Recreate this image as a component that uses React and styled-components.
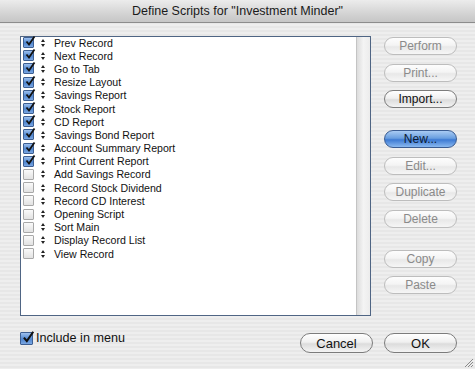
import styled, { createGlobalStyle, css } from "styled-components";

const GlobalStyle = createGlobalStyle`
  html, body {
    margin: 0;
    padding: 0;
  }
  body {
    font-family: "Liberation Sans", "DejaVu Sans", sans-serif;
    color: #111;
  }
`;

const scripts = [
  { name: "Prev Record", on: true },
  { name: "Next Record", on: true },
  { name: "Go to Tab", on: true },
  { name: "Resize Layout", on: true },
  { name: "Savings Report", on: true },
  { name: "Stock Report", on: true },
  { name: "CD Report", on: true },
  { name: "Savings Bond Report", on: true },
  { name: "Account Summary Report", on: true },
  { name: "Print Current Report", on: true },
  { name: "Add Savings Record", on: false },
  { name: "Record Stock Dividend", on: false },
  { name: "Record CD Interest", on: false },
  { name: "Opening Script", on: false },
  { name: "Sort Main", on: false },
  { name: "Display Record List", on: false },
  { name: "View Record", on: false },
];

const Window = styled.div`
  width: 475px;
  height: 369px;
  display: flex;
  flex-direction: column;
  overflow: hidden;
  background: repeating-linear-gradient(
    to bottom,
    #eeeeee 0px,
    #eeeeee 2px,
    #e7e7e7 2px,
    #e7e7e7 4px
  );
  position: relative;
`;

const TitleBar = styled.div`
  height: 22px;
  flex-shrink: 0;
  display: flex;
  align-items: center;
  justify-content: center;
  background: linear-gradient(to bottom, #ececec, #d4d4d4 60%, #c6c6c6);
  border-bottom: 1px solid #8c8c8c;
  font-size: 12.5px;
  color: #1a1a1a;
`;

const Content = styled.div`
  flex: 1;
  display: flex;
  flex-direction: column;
  padding: 13px 18px 0 20px;
`;

const MainRow = styled.div`
  display: flex;
  gap: 13px;
`;

const ListBox = styled.div`
  width: 351px;
  height: 280px;
  box-sizing: border-box;
  border: 1px solid #4f6584;
  background: #fff;
  display: flex;
`;

const List = styled.div`
  flex: 1;
  margin-top: -1px;
`;

const ScrollTrack = styled.div`
  width: 13px;
  border-left: 1px solid #c4c4c4;
  background: linear-gradient(to right, #dcdcdc, #f4f4f4 50%, #ececec);
`;

const Row = styled.div`
  height: 13.2px;
  display: flex;
  align-items: center;
  font-size: 10.6px;
  padding-left: 2px;
`;

const Box = styled.span`
  width: 11px;
  height: 11px;
  flex-shrink: 0;
  border-radius: 1px;
  box-sizing: border-box;
  position: relative;
  ${(p) =>
    p.$on
      ? css`
          border: 1px solid #3d5f93;
          background: linear-gradient(to bottom, #9dc0ee, #4f86d0 55%, #7aa6e2);
        `
      : css`
          border: 1px solid #a8a8a8;
          background: linear-gradient(to bottom, #fafafa, #e2e2e2);
        `}
`;

const Check = styled.svg`
  position: absolute;
  left: 0px;
  top: -3px;
`;

const Arrows = styled.svg`
  margin: 0 9px 0 7px;
  flex-shrink: 0;
`;

const ButtonColumn = styled.div`
  display: flex;
  flex-direction: column;
  padding-top: 1px;
`;

const ButtonGroup = styled.div`
  display: flex;
  flex-direction: column;
  gap: 8.5px;
  margin-bottom: 22px;
`;

const Button = styled.button`
  width: 73px;
  height: 18px;
  box-sizing: border-box;
  border-radius: 9px;
  padding: 0;
  font-family: "Liberation Sans", "DejaVu Sans", sans-serif;
  font-size: 12px;
  border: 1px solid #7c7c7c;
  color: #111;
  background: linear-gradient(to bottom, #ffffff, #f0f0f0 45%, #dcdcdc 55%, #f4f4f4);
  ${(p) =>
    p.$disabled &&
    css`
      border-color: #bdbdbd;
      color: #8a8a8a;
      background: linear-gradient(to bottom, #fdfdfd, #f4f4f4 45%, #e8e8e8 55%, #f6f6f6);
    `}
  ${(p) =>
    p.$default &&
    css`
      border-color: #3a5c92;
      color: #0c1a33;
      background: linear-gradient(to bottom, #a9cbf3, #6a9fe0 45%, #3d7ad3 55%, #8ab9f0);
    `}
`;

const BottomRow = styled.div`
  display: flex;
  align-items: flex-start;
  margin-top: 15px;
`;

const IncludeLabel = styled.label`
  display: flex;
  align-items: center;
  gap: 3px;
  font-size: 12.6px;
  flex: 1;
`;

const BigBox = styled(Box)`
  width: 13px;
  height: 13px;
`;

const DialogButtons = styled.div`
  display: flex;
  gap: 11px;
  margin-top: 2px;
`;

const WideButton = styled(Button)`
  height: 20px;
  border-radius: 10px;
  font-size: 13px;
`;

const Grip = styled.svg`
  position: absolute;
  right: 1px;
  bottom: 1px;
`;

function CheckBox({ on, big }) {
  const B = big ? BigBox : Box;
  return (
    <B $on={on}>
      {on && (
        <Check width={big ? 14 : 12} height={big ? 14 : 12} viewBox="0 0 12 12">
          <path d="M2.5 6.5 L5 9.5 L10.5 1.5" fill="none" stroke="#111" strokeWidth="1.8" />
        </Check>
      )}
    </B>
  );
}

const App = () => {
  return (
    <>
      <GlobalStyle />
      <Window>
        <TitleBar>Define Scripts for "Investment Minder"</TitleBar>
        <Content>
          <MainRow>
            <ListBox>
              <List>
                {scripts.map((s) => (
                  <Row key={s.name}>
                    <CheckBox on={s.on} />
                    <Arrows width="4" height="8" viewBox="0 0 4 8">
                      <path d="M2 0 L4 3 L0 3 Z M2 8 L4 5 L0 5 Z" fill="#222" />
                    </Arrows>
                    {s.name}
                  </Row>
                ))}
              </List>
              <ScrollTrack />
            </ListBox>
            <ButtonColumn>
              <ButtonGroup>
                <Button $disabled>Perform</Button>
                <Button $disabled>Print...</Button>
                <Button>Import...</Button>
              </ButtonGroup>
              <ButtonGroup>
                <Button $default>New...</Button>
                <Button $disabled>Edit...</Button>
                <Button $disabled>Duplicate</Button>
                <Button $disabled>Delete</Button>
              </ButtonGroup>
              <ButtonGroup>
                <Button $disabled>Copy</Button>
                <Button $disabled>Paste</Button>
              </ButtonGroup>
            </ButtonColumn>
          </MainRow>
          <BottomRow>
            <IncludeLabel>
              <CheckBox on big />
              Include in menu
            </IncludeLabel>
            <DialogButtons>
              <WideButton>Cancel</WideButton>
              <WideButton>OK</WideButton>
            </DialogButtons>
          </BottomRow>
        </Content>
        <Grip width="11" height="11" viewBox="0 0 11 11">
          <path d="M10 2 L2 10 M10 5 L5 10 M10 8 L8 10" stroke="#8a8a8a" strokeWidth="1" />
        </Grip>
      </Window>
    </>
  );
};

export default App;
